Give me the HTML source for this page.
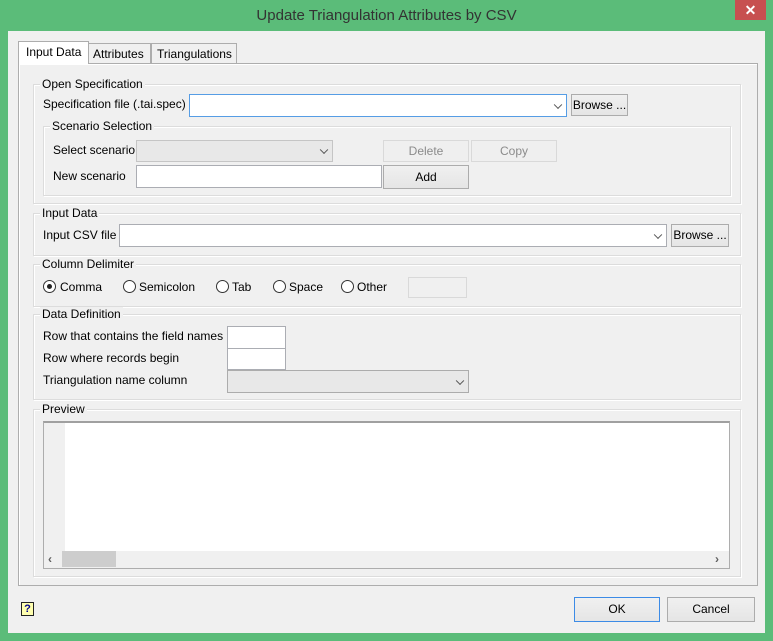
<!DOCTYPE html>
<html><head><style>
*{box-sizing:border-box;margin:0;padding:0}
body{width:773px;height:641px;background:#5bbc79;position:relative;overflow:hidden;font-family:"Liberation Sans",sans-serif;font-size:12px;color:#000}
.a{position:absolute}
.t{position:absolute;white-space:nowrap;line-height:14px}
.client{left:8px;top:31px;width:757px;height:602px;background:#f0f0f0}
.grp{position:absolute;border:1px solid #dcdcdc;box-shadow:inset 1px 1px 0 #fff,1px 1px 0 #fff}
.lbl{position:absolute;background:#f0f0f0;padding:0 2px;line-height:14px;white-space:nowrap}
.inp{position:absolute;background:#fff;border:1px solid #abadb3}
.btn{position:absolute;background:linear-gradient(#f0f0f0,#e5e5e5);border:1px solid #acacac;text-align:center;line-height:20px}
.dis{background:#efefef;border-color:#d9d9d9;color:#8b8b8b}
.arr{position:absolute;right:5px;top:50%;width:6px;height:6px;border-right:1.5px solid #555;border-bottom:1.5px solid #555;transform:translateY(-70%) rotate(45deg)}
.rad{position:absolute;width:13px;height:13px;border:1px solid #333;border-radius:50%;background:#fff}
</style></head><body>
<div class="t" style="left:0;width:773px;top:8px;text-align:center;font-size:15px;color:#333;line-height:16px">Update Triangulation Attributes by CSV</div>
<div class="a" style="left:735px;top:0;width:31px;height:20px;background:#c75050;color:#fff;text-align:center;font-size:14px;line-height:20px;font-weight:bold">✕</div>
<div class="a client"></div>

<div class="a" style="left:18px;top:63px;width:740px;height:523px;border:1px solid #adadad;background:#f0f0f0;box-shadow:inset 1px 1px 0 #fff"></div>
<div class="a" style="left:18px;top:41px;width:71px;height:23px;background:#fff;border:1px solid #adadad;border-bottom:none"></div>
<div class="t" style="left:26px;top:45px">Input Data</div>
<div class="a" style="left:88px;top:43px;width:63px;height:20px;background:#f0f0f0;border:1px solid #adadad;border-bottom:none"></div>
<div class="t" style="left:93px;top:47px">Attributes</div>
<div class="a" style="left:151px;top:43px;width:86px;height:20px;background:#f0f0f0;border:1px solid #adadad;border-bottom:none"></div>
<div class="t" style="left:157px;top:47px">Triangulations</div>

<!-- Open Specification -->
<div class="grp" style="left:33px;top:84px;width:708px;height:120px"></div>
<div class="lbl" style="left:40px;top:77px">Open Specification</div>
<div class="t" style="left:43px;top:97px">Specification file (.tai.spec)</div>
<div class="inp" style="left:189px;top:94px;width:378px;height:23px;border-color:#569de5"><div class="arr"></div></div>
<div class="btn" style="left:571px;top:94px;width:57px;height:22px">Browse ...</div>
<div class="grp" style="left:43px;top:126px;width:688px;height:70px"></div>
<div class="lbl" style="left:50px;top:119px">Scenario Selection</div>
<div class="t" style="left:53px;top:143px">Select scenario</div>
<div class="inp" style="left:136px;top:140px;width:197px;height:22px;background:#e8e8e8;border-color:#c5c5c5"><div class="arr"></div></div>
<div class="btn dis" style="left:383px;top:140px;width:86px;height:22px">Delete</div>
<div class="btn dis" style="left:471px;top:140px;width:86px;height:22px">Copy</div>
<div class="t" style="left:53px;top:169px">New scenario</div>
<div class="inp" style="left:136px;top:165px;width:246px;height:23px"></div>
<div class="btn" style="left:383px;top:165px;width:86px;height:24px;line-height:22px">Add</div>

<!-- Input Data -->
<div class="grp" style="left:33px;top:213px;width:708px;height:43px"></div>
<div class="lbl" style="left:40px;top:206px">Input Data</div>
<div class="t" style="left:43px;top:228px">Input CSV file</div>
<div class="inp" style="left:119px;top:224px;width:548px;height:23px"><div class="arr"></div></div>
<div class="btn" style="left:671px;top:224px;width:58px;height:23px">Browse ...</div>

<!-- Column Delimiter -->
<div class="grp" style="left:33px;top:264px;width:708px;height:43px"></div>
<div class="lbl" style="left:40px;top:257px">Column Delimiter</div>
<div class="rad" style="left:43px;top:280px"><div class="a" style="left:3px;top:3px;width:5px;height:5px;border-radius:50%;background:#222"></div></div>
<div class="t" style="left:60px;top:280px">Comma</div>
<div class="rad" style="left:123px;top:280px"></div><div class="t" style="left:139px;top:280px">Semicolon</div>
<div class="rad" style="left:216px;top:280px"></div><div class="t" style="left:232px;top:280px">Tab</div>
<div class="rad" style="left:273px;top:280px"></div><div class="t" style="left:289px;top:280px">Space</div>
<div class="rad" style="left:341px;top:280px"></div><div class="t" style="left:357px;top:280px">Other</div>
<div class="inp" style="left:408px;top:277px;width:59px;height:21px;background:#f0f0f0;border-color:#d9d9d9"></div>

<!-- Data Definition -->
<div class="grp" style="left:33px;top:314px;width:708px;height:86px"></div>
<div class="lbl" style="left:40px;top:307px">Data Definition</div>
<div class="t" style="left:43px;top:329px">Row that contains the field names</div>
<div class="inp" style="left:227px;top:326px;width:59px;height:23px"></div>
<div class="t" style="left:43px;top:351px">Row where records begin</div>
<div class="inp" style="left:227px;top:348px;width:59px;height:22px"></div>
<div class="t" style="left:43px;top:373px">Triangulation name column</div>
<div class="inp" style="left:227px;top:370px;width:242px;height:23px;background:#e8e8e8;border-color:#acacac"><div class="arr"></div></div>

<!-- Preview -->
<div class="grp" style="left:33px;top:409px;width:708px;height:168px"></div>
<div class="lbl" style="left:40px;top:402px">Preview</div>
<div class="a" style="left:43px;top:421px;width:687px;height:148px;background:#fff;border:1px solid #adadad;border-top:2px solid #a0a0a0"></div>
<div class="a" style="left:44px;top:423px;width:21px;height:128px;background:#f0f0f0"></div>
<div class="a" style="left:44px;top:551px;width:685px;height:17px;background:#f0f0f0"></div>
<div class="a" style="left:62px;top:551px;width:54px;height:16px;background:#cdcdcd"></div>
<div class="t" style="left:48px;top:552px;color:#606060;font-weight:bold">‹</div>
<div class="t" style="left:715px;top:552px;color:#606060;font-weight:bold">›</div>

<!-- bottom -->
<div class="a" style="left:21px;top:602px;width:13px;height:14px;background:#ffffb0;border:1px solid #222;color:#00008b;font-size:11px;font-weight:bold;text-align:center;line-height:12px">?</div>
<div class="btn" style="left:574px;top:597px;width:86px;height:25px;border-color:#3c8be6;line-height:23px">OK</div>
<div class="btn" style="left:667px;top:597px;width:88px;height:25px;line-height:23px">Cancel</div>
</body></html>
